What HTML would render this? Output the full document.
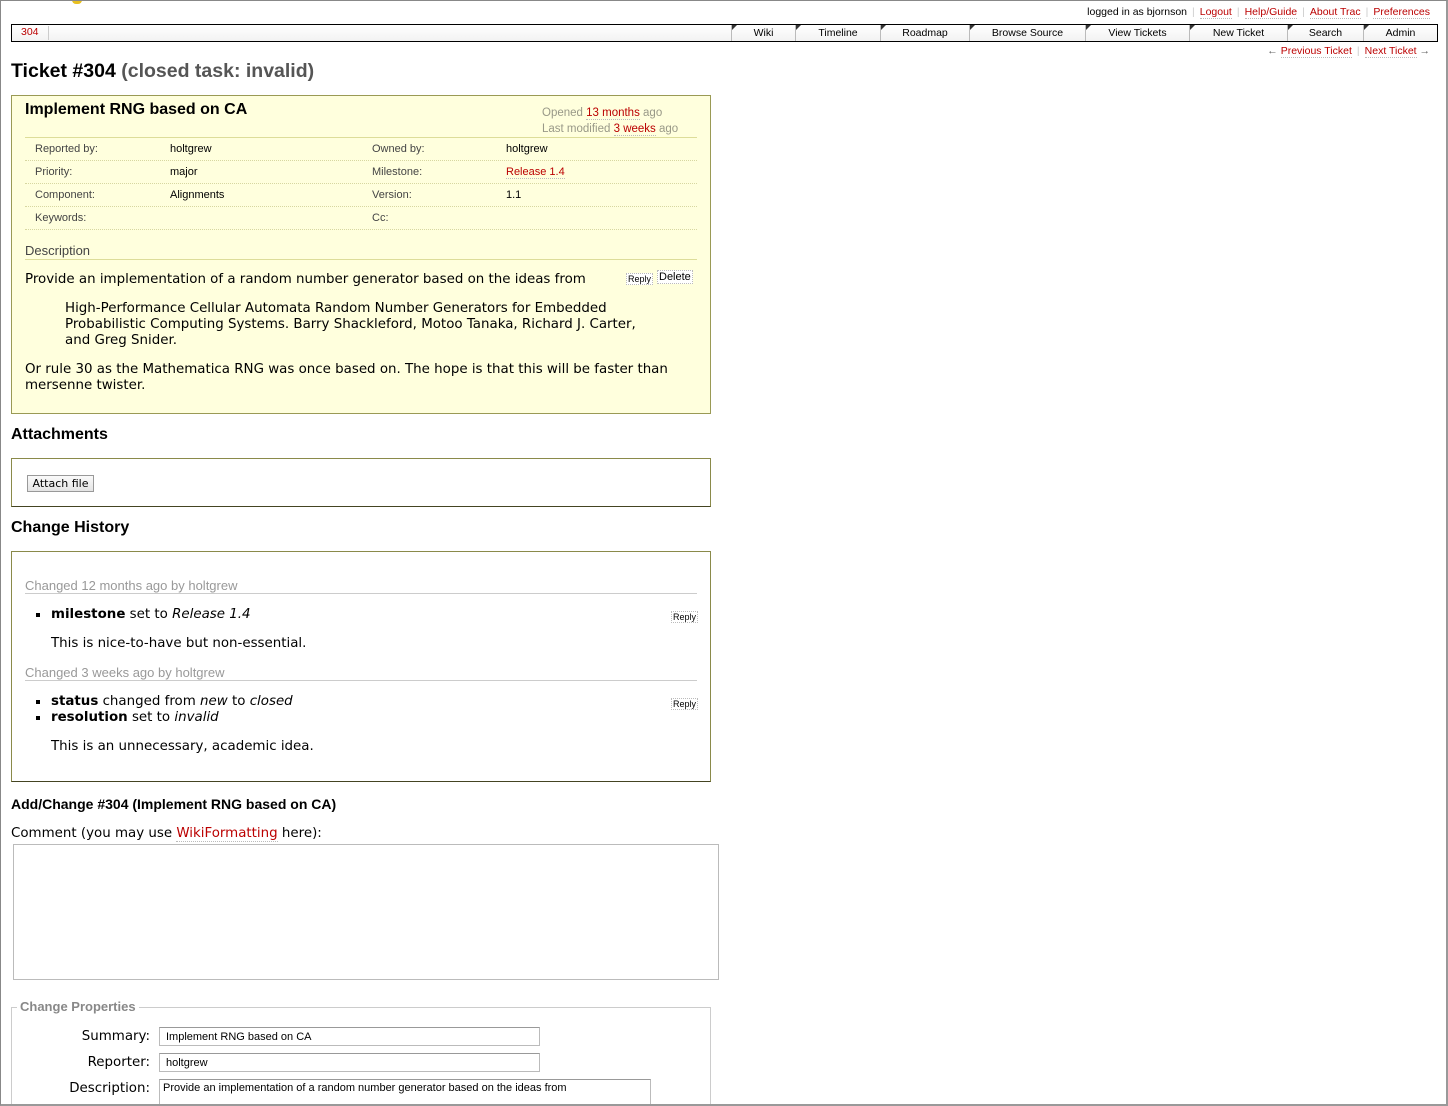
<!DOCTYPE html>
<html style="overflow:hidden;height:1106px"><head><meta charset="utf-8">
<style>
*{box-sizing:border-box;margin:0;padding:0}
body{width:1448px;height:1106px;overflow:hidden;background:#fff;position:relative;font-family:"Liberation Sans",sans-serif;color:#000}
.frame{position:absolute;left:0;top:0;width:1448px;height:1106px;border:1px solid #888;border-right:2px solid #999;border-bottom:2px solid #999;z-index:10;pointer-events:none}
.a{position:absolute;white-space:nowrap}
.red{color:#b00}
.dot{border-bottom:1px dotted #bbb}
.v{font-family:"DejaVu Sans",sans-serif;font-size:13.4px}
.meta{font-size:10.5px}
.sep{color:#ccc;margin:0 5px}
.nav{position:absolute;left:11px;top:24px;width:1427px;height:18px;border:1px solid #000;background:linear-gradient(#fff,#f2f2f2)}
.tab{position:absolute;top:0;height:16px;border-left:1px solid #bbb;font-size:10.5px;text-align:center;line-height:17px}
.tab:before{content:"";position:absolute;left:0;top:0;border-top:5px solid #333;border-right:5px solid transparent}
.box{position:absolute;left:11px;width:700px}
.lbl{font-size:11px;color:#444}
.val{font-size:11px}
.rowline{position:absolute;left:25px;width:672px;border-top:1px dotted #d7d7a0}
.btn{position:absolute;font-size:9px;border:1px dotted #bbb;padding:0 1px;background:#fff}
.inp{position:absolute;border:1px solid #bbb;border-top-color:#999;font-size:11px;padding:3px 6px;background:#fff}
</style></head><body>
<div class="frame"></div>
<div class="a" style="left:72px;top:0;width:10px;height:4px;background:#e8c020;border-radius:0 0 5px 5px"></div>

<div class="a meta" style="right:18px;top:6px">logged in as bjornson<span class="sep">|</span><span class="red dot">Logout</span><span class="sep">|</span><span class="red dot">Help/Guide</span><span class="sep">|</span><span class="red dot">About Trac</span><span class="sep">|</span><span class="red dot">Preferences</span></div>

<div class="nav">
 <span class="a red" style="left:9px;top:1px;font-size:10.5px;">304</span>
 <span class="a" style="left:36px;top:1px;height:14px;border-left:1px solid #ccc"></span>
 <div class="tab" style="left:719px;width:64px">Wiki</div>
 <div class="tab" style="left:783px;width:85px">Timeline</div>
 <div class="tab" style="left:868px;width:89px">Roadmap</div>
 <div class="tab" style="left:957px;width:116px">Browse Source</div>
 <div class="tab" style="left:1073px;width:104px">View Tickets</div>
 <div class="tab" style="left:1177px;width:98px">New Ticket</div>
 <div class="tab" style="left:1275px;width:76px">Search</div>
 <div class="tab" style="left:1351px;width:74px">Admin</div>
</div>

<div class="a meta" style="right:18px;top:45px"><span style="color:#666">←</span> <span class="red dot">Previous Ticket</span><span class="sep">|</span><span class="red dot">Next Ticket</span> <span style="color:#666">→</span></div>

<div class="a" style="left:11px;top:60px;font-size:19.5px;font-weight:bold">Ticket #304 <span style="color:#555">(closed task: invalid)</span></div>

<div class="box" style="top:95px;height:319px;background:#ffffdd;border:1px solid #9a9a55"></div>
<div class="a" style="left:25px;top:101px;font-size:16px;font-weight:bold">Implement RNG based on CA</div>
<div class="a" style="left:542px;top:105px;font-size:11.5px;color:#998;line-height:16px">Opened <span class="red dot">13 months</span> ago<br>Last modified <span class="red dot">3 weeks</span> ago</div>
<div class="a" style="left:25px;top:137px;width:672px;border-top:1px solid #dd9"></div>
<div class="a lbl" style="left:35px;top:143px">Reported by:</div><div class="a val" style="left:170px;top:143px">holtgrew</div>
<div class="a lbl" style="left:372px;top:143px">Owned by:</div><div class="a val" style="left:506px;top:143px">holtgrew</div>
<div class="rowline" style="top:160px"></div>
<div class="a lbl" style="left:35px;top:166px">Priority:</div><div class="a val" style="left:170px;top:166px">major</div>
<div class="a lbl" style="left:372px;top:166px">Milestone:</div><div class="a val red dot" style="left:506px;top:166px">Release 1.4</div>
<div class="rowline" style="top:183px"></div>
<div class="a lbl" style="left:35px;top:189px">Component:</div><div class="a val" style="left:170px;top:189px">Alignments</div>
<div class="a lbl" style="left:372px;top:189px">Version:</div><div class="a val" style="left:506px;top:189px">1.1</div>
<div class="rowline" style="top:206px"></div>
<div class="a lbl" style="left:35px;top:212px">Keywords:</div>
<div class="a lbl" style="left:372px;top:212px">Cc:</div>
<div class="rowline" style="top:229px"></div>
<div class="a" style="left:25px;top:243px;font-size:13px;color:#444">Description</div>
<div class="a" style="left:25px;top:259px;width:672px;border-top:1px solid #dd9"></div>
<div class="a v" style="left:25px;top:272px">Provide an implementation of a random number generator based on the ideas from</div>
<div class="btn" style="left:626px;top:273px">Reply</div>
<div class="btn" style="left:657px;top:270px;font-size:11px">Delete</div>
<div class="a v" style="left:65px;top:301px;line-height:16px">High-Performance Cellular Automata Random Number Generators for Embedded<br>Probabilistic Computing Systems. Barry Shackleford, Motoo Tanaka, Richard J. Carter,<br>and Greg Snider.</div>
<div class="a v" style="left:25px;top:362px;line-height:16px">Or rule 30 as the Mathematica RNG was once based on. The hope is that this will be faster than<br>mersenne twister.</div>

<div class="a" style="left:11px;top:426px;font-size:16px;font-weight:bold">Attachments</div>
<div class="box" style="top:458px;height:49px;border:1px solid #8a8a4a;border-bottom-color:#444422"></div>
<div class="a" style="left:27px;top:475px;width:67px;height:17px;border:1px solid #999;background:linear-gradient(#fafafa,#e4e4e4);font-size:11px;font-family:'DejaVu Sans',sans-serif;text-align:center;line-height:15px">Attach file</div>

<div class="a" style="left:11px;top:519px;font-size:16px;font-weight:bold">Change History</div>
<div class="box" style="top:551px;height:231px;border:1px solid #8a8a4a;border-bottom-color:#444422"></div>
<div class="a" style="left:25px;top:578px;font-size:13px;color:#999">Changed <span class="dot">12 months</span> ago by holtgrew</div>
<div class="a" style="left:25px;top:593px;width:672px;border-top:1px solid #ccc"></div>
<div class="a" style="left:36px;top:613px;width:4px;height:4px;background:#000"></div>
<div class="a v" style="left:51px;top:607px"><b>milestone</b> set to <i>Release 1.4</i></div>
<div class="btn" style="left:671px;top:611px">Reply</div>
<div class="a v" style="left:51px;top:636px">This is nice-to-have but non-essential.</div>
<div class="a" style="left:25px;top:665px;font-size:13px;color:#999">Changed <span class="dot">3 weeks</span> ago by holtgrew</div>
<div class="a" style="left:25px;top:680px;width:672px;border-top:1px solid #ccc"></div>
<div class="a" style="left:36px;top:700px;width:4px;height:4px;background:#000"></div>
<div class="a" style="left:36px;top:716px;width:4px;height:4px;background:#000"></div>
<div class="a v" style="left:51px;top:694px;line-height:16px"><b>status</b> changed from <i>new</i> to <i>closed</i><br><b>resolution</b> set to <i>invalid</i></div>
<div class="btn" style="left:671px;top:698px">Reply</div>
<div class="a v" style="left:51px;top:739px">This is an unnecessary, academic idea.</div>

<div class="a" style="left:11px;top:796px;font-size:14px;font-weight:bold">Add/Change #304 (Implement RNG based on CA)</div>
<div class="a v" style="left:11px;top:826px">Comment (you may use <span class="red dot">WikiFormatting</span> here):</div>
<div class="a" style="left:13px;top:844px;width:706px;height:136px;border:1px solid #bbb"></div>

<div class="a" style="left:11px;top:1007px;width:700px;height:99px;border:1px solid #ccc;border-bottom:none"></div>
<div class="a" style="left:17px;top:999px;padding:0 3px;background:#fff;font-size:13px;font-weight:bold;color:#888">Change Properties</div>
<div class="a v" style="left:11px;top:1029px;width:139px;text-align:right">Summary:</div>
<div class="inp" style="left:159px;top:1027px;width:381px;height:19px">Implement RNG based on CA</div>
<div class="a v" style="left:11px;top:1055px;width:139px;text-align:right">Reporter:</div>
<div class="inp" style="left:159px;top:1053px;width:381px;height:19px">holtgrew</div>
<div class="a v" style="left:11px;top:1081px;width:139px;text-align:right">Description:</div>
<div class="inp" style="left:159px;top:1079px;width:492px;height:27px;padding:2px 3px;border-bottom:none">Provide an implementation of a random number generator based on the ideas from</div>
</body></html>
